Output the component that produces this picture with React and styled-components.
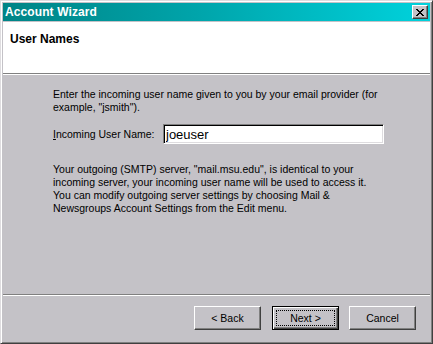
import styled, { createGlobalStyle } from "styled-components";

const FACE = "#c4c2c7";

const GlobalStyle = createGlobalStyle`
    html, body {
        margin: 0;
        padding: 0;
        background: ${FACE};
    }
`

function CloseGlyph() {
    return (
        <svg width="8" height="7" viewBox="0 0 8 7" shapeRendering="crispEdges">
            <path d="M0 0h2v1h-2zM6 0h2v1h-2zM1 1h2v1h-2zM5 1h2v1h-2zM2 2h4v1h-4zM3 3h2v1h-2zM2 4h4v1h-4zM1 5h2v1h-2zM5 5h2v1h-2zM0 6h2v1h-2zM6 6h2v1h-2z" fill="#000" />
        </svg>
    )
}

function App() {
    return (
        <>
            <GlobalStyle />
            <Window>
                <TitleBar>
                    <Title>Account Wizard</Title>
                    <CloseButton aria-label="Close"><CloseGlyph /></CloseButton>
                </TitleBar>
                <Client>
                    <Header>
                        <HeaderTitle>User Names</HeaderTitle>
                    </Header>
                    <Body>
                        <Text>
                            Enter the incoming user name given to you by your email provider (for<br />
                            example, "jsmith").
                        </Text>
                        <FieldRow>
                            <Label><u>I</u>ncoming User Name:</Label>
                            <Input defaultValue="joeuser" />
                        </FieldRow>
                        <Text gap={19}>
                            Your outgoing (SMTP) server, "mail.msu.edu", is identical to your<br />
                            incoming server, your incoming user name will be used to access it.<br />
                            You can modify outgoing server settings by choosing Mail &amp;<br />
                            Newsgroups Account Settings from the Edit menu.
                        </Text>
                    </Body>
                    <Footer>
                        <Button>&lt; Back</Button>
                        <Button primary>
                            <Focus>Next &gt;</Focus>
                        </Button>
                        <Button>Cancel</Button>
                    </Footer>
                </Client>
            </Window>
        </>
    )
}

export default App;


const Window = styled.div`
    width: 433px;
    height: 344px;
    box-sizing: border-box;
    display: flex;
    flex-direction: column;
    background: ${FACE};
    border: 1px solid;
    border-color: #dedcdf #404040 #404040 #dedcdf;
    box-shadow: inset 1px 1px #ffffff, inset -1px -1px #808080;
    padding: 2px;
    font-family: "Liberation Sans", Arial, sans-serif;
    font-size: 10.5px;
    color: #000;
`

const TitleBar = styled.div`
    height: 18px;
    display: flex;
    align-items: center;
    justify-content: space-between;
    padding: 0 2px;
    background: linear-gradient(90deg, #008486 0%, #00a4aa 45%, #00d2dc 100%);
`

const Title = styled.div`
    color: #fff;
    font-weight: 700;
    font-size: 12px;
    letter-spacing: 0.1px;
`

const CloseButton = styled.button`
    width: 16px;
    height: 14px;
    padding: 0;
    display: flex;
    align-items: center;
    justify-content: center;
    background: ${FACE};
    border: 1px solid;
    border-color: #ffffff #404040 #404040 #ffffff;
    box-shadow: inset -1px -1px #808080;
`

const Client = styled.div`
    flex: 1;
    margin-top: 1px;
    display: flex;
    flex-direction: column;
`

const Header = styled.div`
    background: #fff;
    border-bottom: 1px solid #808080;
    box-shadow: 0 1px #ffffff;
    padding: 10px 7px 0;
    height: 41px;
`

const HeaderTitle = styled.div`
    font-weight: 700;
    font-size: 12px;
    line-height: 14px;
`

const Body = styled.div`
    flex: 1;
    margin-top: 1px;
    padding: 13px 0 0 50px;
    display: flex;
    flex-direction: column;
`

const Text = styled.div`
    line-height: 13px;
    white-space: nowrap;
    margin-top: ${props => props.gap || 0}px;
`

const FieldRow = styled.div`
    display: flex;
    align-items: center;
    margin-top: 10px;
    height: 20px;
`

const Label = styled.label`
    width: 110px;
    flex: none;

    u {
        text-decoration: underline;
        text-underline-offset: 1px;
    }
`

const Input = styled.input`
    width: 221px;
    height: 20px;
    box-sizing: border-box;
    margin: 0;
    padding: 1px 2px 0;
    font-family: "Liberation Sans", Arial, sans-serif;
    font-size: 13px;
    color: #000;
    background: #fff;
    border: 1px solid;
    border-color: #808080 #ffffff #ffffff #808080;
    box-shadow: inset 1px 1px #000000, inset -1px -1px #dedcdf;
    outline: none;
`

const Footer = styled.div`
    display: flex;
    justify-content: flex-end;
    gap: 11px;
    padding: 11px 14px 11px 0;
    border-top: 1px solid #808080;
    box-shadow: inset 0 1px #ffffff;
`

const Button = styled.button`
    width: 67px;
    height: 24px;
    box-sizing: border-box;
    padding: ${props => props.primary ? "3px" : "0"};
    margin: 0;
    display: flex;
    align-items: center;
    justify-content: center;
    font-family: "Liberation Sans", Arial, sans-serif;
    font-size: 10.5px;
    color: #000;
    background: ${FACE};
    border: 1px solid;
    border-color: ${props => props.primary ? "#000" : "#ffffff #404040 #404040 #ffffff"};
    box-shadow: ${props => props.primary
        ? "inset 1px 1px #ffffff, inset -1px -1px #404040, inset -2px -2px #808080"
        : "inset -1px -1px #808080"};

    &:last-child {
        margin-left: -1px;
    }
`

const Focus = styled.span`
    flex: 1;
    align-self: stretch;
    display: flex;
    align-items: center;
    justify-content: center;
    border: 1px dotted #000;
`
